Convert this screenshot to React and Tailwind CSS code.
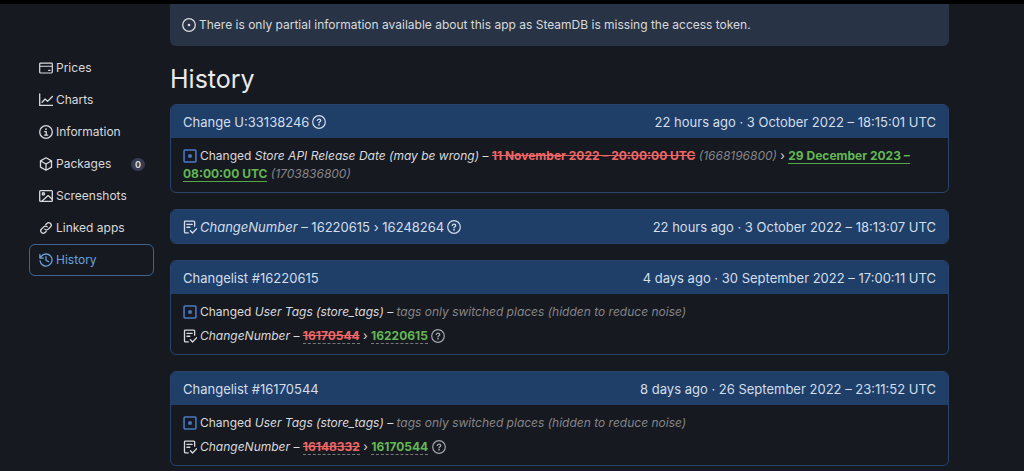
const icons = {
  prices: (
    <>
      <rect x="0.8" y="2.3" width="14.4" height="11.4" rx="1" strokeWidth="1.4" />
      <path d="M1 6h14M11 10.6h1.6" strokeWidth="1.4" />
    </>
  ),
  charts: <path d="M.8 1v13.2H16M3.5 10.5 7 6.8l2.8 2.8L15.3 4" />,
  info: (
    <>
      <circle cx="8" cy="8" r="7.2" />
      <path d="M6.5 7.5h1.8v4M6.3 11.5h3.7" />
      <circle cx="8" cy="4.8" r="1" fill="currentColor" stroke="none" />
    </>
  ),
  packages: <path d="M8 .9 14.3 4.4v7.2L8 15.1 1.7 11.6V4.4ZM1.9 4.6 8 8l6.1-3.4M8 8v7" />,
  image: (
    <>
      <rect x=".8" y="1.8" width="14.4" height="12.4" rx="1" />
      <circle cx="5" cy="5.6" r="1.3" />
      <path d="m3.2 14 7.3-6.5 4.6 4.2" />
    </>
  ),
  link: (
    <>
      <path d="m7.8 4.1 1.3-1.3a2.8 2.8 0 0 1 4 4l-2.5 2.5a2.8 2.8 0 0 1-4 0" />
      <path d="m8.2 11.9-1.3 1.3a2.8 2.8 0 0 1-4-4l2.5-2.5a2.8 2.8 0 0 1 4 0" />
    </>
  ),
  history: <path d="M1.2 9.1A6.9 6.9 0 1 0 2.4 4L1 5.6M1 1.8v4h4M8 4.2v4.1l2.9 1.5" />,
  question: (
    <>
      <circle cx="8" cy="8" r="7.2" strokeWidth="1.4" />
      <path d="M6 6.2C6.4 5.2 7.1 4.8 8 4.8c1.2 0 2 .6 2 1.5C10 7.6 8 7.7 8 9" />
      <circle cx="8" cy="11.2" r="1" fill="currentColor" stroke="none" />
    </>
  ),
  notice: (
    <>
      <circle cx="8" cy="8" r="7.2" />
      <circle cx="8" cy="8" r="1.5" fill="currentColor" stroke="none" />
    </>
  ),
  modified: (
    <>
      <rect x="1.2" y="1.2" width="13.6" height="13.6" rx="1" strokeWidth="1.8" />
      <rect x="6" y="6" width="4" height="4" rx="1" fill="currentColor" stroke="none" />
    </>
  ),
  checklist: (
    <path d="M13.3 7V2.2a1 1 0 0 0-1-1H2.7a1 1 0 0 0-1 1v11.6a1 1 0 0 0 1 1H6M4.5 5h6M4.5 8.3h3.3M8.5 12.3l2.4 2.5 4.7-5" />
  ),
};

const links = [
  { label: 'Prices', icon: 'prices' },
  { label: 'Charts', icon: 'charts' },
  { label: 'Information', icon: 'info' },
  { label: 'Packages', icon: 'packages', count: 0 },
  { label: 'Screenshots', icon: 'image' },
  { label: 'Linked apps', icon: 'link' },
  { label: 'History', icon: 'history', active: true },
];

const changelists = [
  { id: '16220615', previous: '16170544', date: '4 days ago · 30 September 2022 – 17:00:11 UTC' },
  { id: '16170544', previous: '16148332', date: '8 days ago · 26 September 2022 – 23:11:52 UTC' },
];

function Icon({ name, className = '' }) {
  return (
    <svg
      viewBox="0 0 16 16"
      className={`h-[14px] w-[14px] shrink-0 ${className}`}
      fill="none"
      stroke="currentColor"
      strokeWidth="1.5"
      strokeLinecap="round"
      strokeLinejoin="round"
      aria-hidden="true"
    >
      {icons[name]}
    </svg>
  );
}

function Sidebar() {
  return (
    <nav className="mt-12 flex w-[125px] shrink-0 flex-col">
      {links.map(({ label, icon, count, active }) => (
        <a
          key={label}
          href="#"
          className={
            active
              ? 'flex h-8 items-center gap-[3px] rounded-md border border-[#3d6590] pl-[9px] text-[#67a3dc]'
              : 'flex h-8 items-center gap-[3px] rounded-md border border-transparent pl-[9px]'
          }
        >
          <Icon name={icon} />
          {label}
          {count !== undefined && (
            <span className="mr-2 ml-auto rounded-full bg-[#363c50] px-[4px] text-[9px] leading-[13px] font-bold">
              {count}
            </span>
          )}
        </a>
      ))}
    </nav>
  );
}

function Panel({ title, date, children }) {
  return (
    <section className="overflow-hidden rounded-md border border-[#29436a]">
      {/* Title bar */}
      <header className="flex h-[33px] items-center justify-between bg-[#1f3f69] px-3 text-[13px] text-[#d3deeb]">
        <h2 className="flex items-center gap-[3px]">{title}</h2>
        <time>{date}</time>
      </header>
      {children && <ul className="flex flex-col gap-[6px] px-3 py-[9px]">{children}</ul>}
    </section>
  );
}

export default function App() {
  return (
    <div className="min-h-screen border-t-4 border-black bg-[#161920] pb-1 font-['Inter','Liberation_Sans',sans-serif] text-[12px] leading-[18px] text-[#d9dadd]">
      <div className="flex gap-4 pr-[75px] pl-[29px]">
        <Sidebar />

        <main className="min-w-0 flex-1">
          {/* Missing token notice */}
          <p className="flex h-[42px] items-center gap-[3px] rounded-b-md bg-[#283446] px-3">
            <Icon name="notice" />
            There is only partial information available about this app as SteamDB is missing the access token.
          </p>

          <h1 className="mt-[17px] mb-[9px] text-[25px] leading-8 text-[#e9eaec]">History</h1>

          <div className="flex flex-col gap-4">
            <Panel
              title={<>Change U:33138246 <Icon name="question" /></>}
              date="22 hours ago · 3 October 2022 – 18:15:01 UTC"
            >
              <li>
                <Icon name="modified" className="mr-[3px] inline align-[-3px] text-[#4a78c2]" />
                Changed <i>Store API Release Date (may be wrong)</i> –{' '}
                <del className="font-bold text-[#ef6667]">11 November 2022 – 20:00:00 UTC</del>{' '}
                <i className="text-[#858589]">(1668196800)</i> ›{' '}
                <ins className="border-b border-[#57a64a] font-bold text-[#63b755] no-underline">
                  29 December 2023 – 08:00:00 UTC
                </ins>{' '}
                <i className="text-[#858589]">(1703836800)</i>
              </li>
            </Panel>

            <Panel
              title={
                <>
                  <Icon name="checklist" />
                  <span><i>ChangeNumber</i> – 16220615 › 16248264</span>
                  <Icon name="question" />
                </>
              }
              date="22 hours ago · 3 October 2022 – 18:13:07 UTC"
            />

            {changelists.map((change) => (
              <Panel key={change.id} title={`Changelist #${change.id}`} date={change.date}>
                <li>
                  <Icon name="modified" className="mr-[3px] inline align-[-3px] text-[#4a78c2]" />
                  Changed <i>User Tags (store_tags)</i> –{' '}
                  <i className="text-[#858589]">tags only switched places (hidden to reduce noise)</i>
                </li>
                <li>
                  <Icon name="checklist" className="mr-[3px] inline align-[-3px]" />
                  <i>ChangeNumber</i> –{' '}
                  <del className="border-b border-dashed border-[#77797d] font-bold text-[#ef6667]">{change.previous}</del> ›{' '}
                  <ins className="border-b border-dashed border-[#77797d] font-bold text-[#63b755] no-underline">{change.id}</ins>{' '}
                  <Icon name="question" className="inline align-[-3px] text-[#a3a4a8]" />
                </li>
              </Panel>
            ))}
          </div>
        </main>
      </div>
    </div>
  );
}
